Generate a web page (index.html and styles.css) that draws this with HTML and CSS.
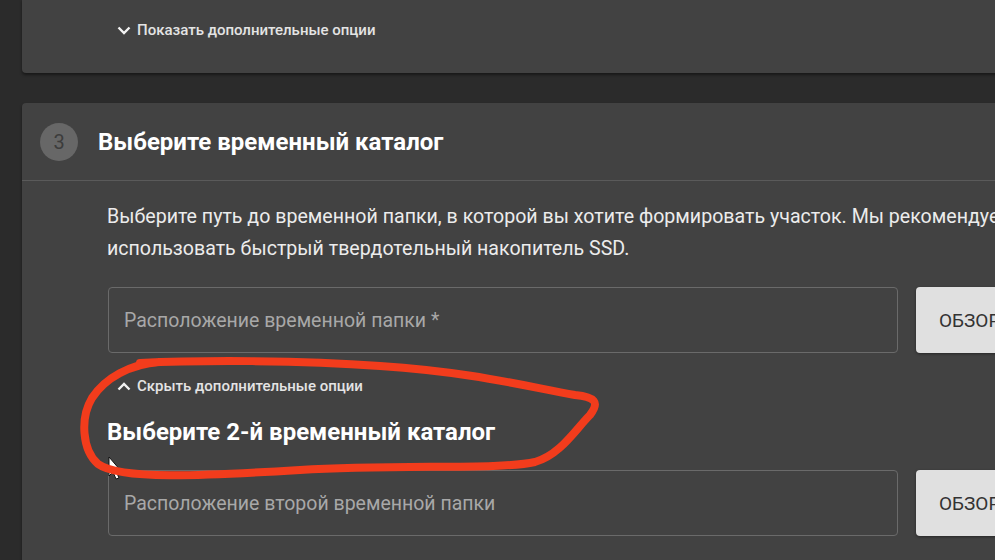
FILE: index.html
```html
<!DOCTYPE html>
<html lang="ru">
<head>
    <meta charset="UTF-8">
    <meta name="viewport" content="width=device-width, initial-scale=1.0">
    <title>Создание участка</title>
    <link rel="stylesheet" href="styles.css">
</head>
<body>

    <div class="page">
        <section class="card card-top">
            <button class="toggle">
                <svg class="chevron" viewBox="0 0 14 9"><path d="M1.5 1.5 7 7l5.5-5.5"/></svg>
                Показать дополнительные опции
            </button>
        </section>

        <section class="card step">
            <header class="step-head">
                <span class="step-num">3</span>
                <h2>Выберите временный каталог</h2>
            </header>

            <div class="step-body">
                <p class="hint">Выберите путь до временной папки, в которой вы хотите формировать участок. Мы рекомендуем использовать быстрый твердотельный накопитель SSD.</p>

                <div class="field-row">
                    <div class="field">Расположение временной папки *</div>
                    <button class="browse">Обзор</button>
                </div>

                <button class="toggle">
                    <svg class="chevron" viewBox="0 0 14 9"><path d="M1.5 7.5 7 2l5.5 5.5"/></svg>
                    Скрыть дополнительные опции
                </button>

                <h3>Выберите 2-й временный каталог</h3>

                <div class="field-row">
                    <div class="field">Расположение второй временной папки</div>
                    <button class="browse">Обзор</button>
                </div>
            </div>
        </section>
    </div>

    <!-- cursor + red marker drawn over the screenshot -->
    <svg class="annot" width="995" height="560" viewBox="0 0 995 560">
        <path class="cursor" d="M109 457 L109 476 L113 472 L116 479 L119 478 L116 471 L121 471 Z"/>
        <path class="marker" d="M160 362 C130 364 105 378 92 398 C80 418 82 450 98 464 C120 480 200 476 300 470 C400 464 500 470 535 462 C560 455 575 430 590 415 C600 402 595 397 575 395 C520 385 470 372 380 366 C300 360 200 360 140 363"/>
    </svg>

</body>
</html>
```

FILE: styles.css
```css
body {
    margin: 0;
    background-color: #2b2b2b;
    font-family: Roboto, "Noto Sans", sans-serif;
    color: #fff;
    overflow: hidden;
    height: 560px;
    position: relative;
}
.page {
    width: 1200px;
    padding-left: 22px;
    border-left: 18px solid #2e2e2e;
    margin-left: -18px;
}
.card {
    background-color: #424242;
    border-radius: 4px;
    box-shadow: 0 2px 3px rgba(0, 0, 0, 0.45);
}
.card-top {
    height: 74px;
    border-top-left-radius: 0;
    padding: 22px 0 0 95px;
    box-sizing: border-box;
    margin-top: -1px;
}
.toggle {
    display: flex;
    align-items: center;
    gap: 6px;
    height: 18px;
    background: none;
    border: 0;
    padding: 0;
    color: #e4e4e4;
    font-family: Roboto, sans-serif;
    font-size: 15px;
    line-height: 18px;
    font-weight: 500;
    cursor: pointer;
}
.chevron {
    width: 14px;
    height: 9px;
    fill: none;
    stroke: #f2f2f2;
    stroke-width: 2.4;
}
.step {
    margin-top: 30px;
}
.step-head {
    height: 77px;
    display: flex;
    align-items: center;
    padding-left: 18px;
    border-bottom: 1px solid #5a5a5a;
}
.step-num {
    width: 38px;
    height: 38px;
    border-radius: 50%;
    background-color: #676767;
    color: #3c3c3c;
    font-size: 20px;
    display: flex;
    align-items: center;
    justify-content: center;
    margin-right: 20px;
}
.step-head h2 {
    margin: 0;
    font-size: 24px;
    line-height: 30px;
    font-weight: 700;
}
.step-body {
    padding: 20px 0 30px 85px;
}
.hint {
    margin: 0;
    width: 1030px;
    font-size: 19.6px;
    line-height: 32px;
    color: #ececec;
}
.field-row {
    display: flex;
    gap: 18px;
    margin-top: 22px;
    padding-left: 1px;
}
.field {
    width: 790px;
    height: 66px;
    box-sizing: border-box;
    border: 1px solid #6a6a6a;
    border-radius: 4px;
    padding-left: 15px;
    display: flex;
    align-items: center;
    font-size: 19.5px;
    color: #a8a8a8;
}
.browse {
    width: 120px;
    height: 66px;
    border: 0;
    border-radius: 4px;
    background-color: #e0e0e0;
    color: #333;
    font-family: Roboto, sans-serif;
    font-size: 19px;
    font-weight: 400;
    text-transform: uppercase;
    text-align: left;
    padding-left: 23px;
    box-shadow: 0 1px 3px rgba(0, 0, 0, 0.4);
}
.step-body .toggle {
    margin: 24px 0 0 10px;
}
.step-body h3 {
    margin: 22px 0 0;
    font-size: 24px;
    line-height: 30px;
    font-weight: 700;
}
.step-body h3 + .field-row {
    margin-top: 23px;
}
.annot {
    position: absolute;
    left: 0;
    top: 0;
    pointer-events: none;
}
.marker {
    fill: none;
    stroke: #f23c1c;
    stroke-width: 8;
    stroke-linecap: round;
    stroke-linejoin: round;
}
.cursor {
    fill: #fff;
    stroke: #111;
    stroke-width: 1;
}
```
